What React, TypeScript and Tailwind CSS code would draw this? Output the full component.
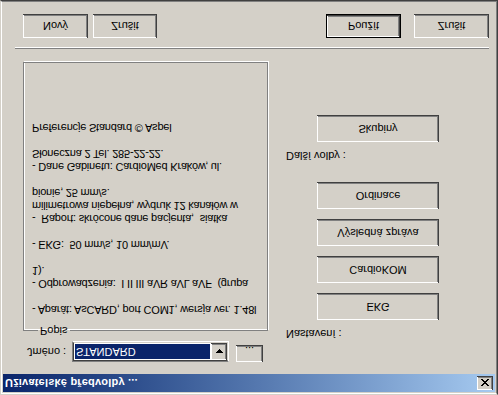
import React from "react";

const raised =
  "flex items-center justify-center bg-[#d4d0c8] text-black shadow-[inset_-1px_-1px_#404040,inset_1px_1px_#fff,inset_-2px_-2px_#808080,inset_2px_2px_#d4d0c8]";

const lines = [
  "- Aparát: AsCARD, port COM1, wersja ver. 1.48l",
  "",
  "- Odprowadzenia:  I II III aVR aVL aVF  (grupa",
  "1).",
  "",
  "- EKG:  50 mm/s, 10 mm/mV.",
  "",
  "-  Raport: skrócone dane pacjenta,  siatka",
  "milimetrowa niepełna, wydruk 12 kanałów w",
  "pionie, 25 mm/s.",
  "",
  "- Dane Gabinetu: CardioMed Kraków, ul.",
  "Słoneczna 2 Tel. 285-22-22.",
  "",
  "Preferencje Standard © Aspel",
];

const CloseGlyph = () => (
  <svg width="8" height="7" viewBox="0 0 8 7" shapeRendering="crispEdges">
    <path
      d="M0 0h2v1H0zM6 0h2v1H6zM1 1h2v1H1zM5 1h2v1H5zM2 2h4v1H2zM3 3h2v1H3zM2 4h4v1H2zM1 5h2v1H1zM5 5h2v1H5zM0 6h2v1H0zM6 6h2v1H6z"
      fill="#000"
    />
  </svg>
);

const SideButton = ({ label }: { label: string }) => (
  <div className={`${raised} w-[122px] h-[27px]`}>{label}</div>
);

const App = () => {
  return (
    <div className="w-[498px] h-[395px] -scale-y-100 bg-[#d4d0c8] font-['Liberation_Sans',Arial,sans-serif] text-[11px] leading-[13px] text-black">
      <div className="h-full border border-t-[#d4d0c8] border-l-[#d4d0c8] border-r-[#404040] border-b-[#404040]">
        <div className="h-full flex flex-col p-px border border-t-white border-l-white border-r-[#808080] border-b-[#808080]">
          {/* title bar */}
          <div className="h-[18px] flex items-center bg-gradient-to-r from-[#0a246a] to-[#a6caf0] pl-[2px] pr-[2px]">
            <span className="text-white font-bold flex-1 tracking-[0.2px]">Uživatelské předvolby ...</span>
            <div className={`${raised} w-[16px] h-[14px]`}>
              <CloseGlyph />
            </div>
          </div>

          <div className="flex">
            {/* left column */}
            <div className="pl-[20px] w-[265px]">
              <div className="mt-[12px] flex items-start h-[21px]">
                <span className="w-[49px] pl-[4px] self-center">Jméno :</span>
                <div className="w-[157px] h-[21px] flex border border-t-[#808080] border-l-[#808080] border-r-white border-b-white">
                  <div className="flex-1 flex border border-t-[#404040] border-l-[#404040] border-r-[#d4d0c8] border-b-[#d4d0c8] bg-white">
                    <div className="flex-1 p-px">
                      <div className="h-full bg-[#0a246a] text-white pl-[1px] flex items-center">STANDARD</div>
                    </div>
                    <div className={`${raised} w-[16px] h-[17px]`}>
                      <svg width="7" height="4" viewBox="0 0 7 4" shapeRendering="crispEdges">
                        <path d="M0 0h7v1H0zM1 1h5v1H1zM2 2h3v1H2zM3 3h1v1H3z" fill="#000" />
                      </svg>
                    </div>
                  </div>
                </div>
                <div className={`${raised} ml-[7px] w-[27px] h-[17px] items-end pb-[2px] leading-[8px]`}>...</div>
              </div>

              <fieldset className="mt-[4px] w-[245px] h-[275px] border border-[#808080] shadow-[1px_1px_0_#fff,inset_1px_1px_0_#fff] pl-[8px] pt-[8px]">
                <legend className="ml-[6px] px-[2px]">Popis</legend>
                {lines.map((l, i) => (
                  <div key={i} className="h-[13px] whitespace-pre tracking-[-0.2px]">
                    {l}
                  </div>
                ))}
              </fieldset>
            </div>

            {/* right column */}
            <div className="ml-[18px] pt-[34px]">
              <div>Nastavení :</div>
              <div className="mt-[7px] ml-[31px] flex flex-col gap-[10px]">
                <SideButton label="EKG" />
                <SideButton label="CardioKOM" />
                <SideButton label="Výsledná zpráva" />
                <SideButton label="Ordinace" />
              </div>
              <div className="mt-[20px]">Další volby :</div>
              <div className="mt-[7px] ml-[31px]">
                <SideButton label="Skupiny" />
              </div>
            </div>
          </div>

          <div className="mt-[13px] ml-[12px] mr-[6px] border-t border-t-[#808080] border-b border-b-white" />

          <div className="mt-[9px] flex items-center pl-[20px] pr-[6px]">
            <div className={`${raised} w-[65px] h-[24px]`}>Nový</div>
            <div className={`${raised} ml-[5px] w-[64px] h-[24px]`}>Zrušit</div>
            <div className="flex-1" />
            <div className="w-[75px] h-[24px] border border-black">
              <div className={`${raised} w-full h-full`}>Použít</div>
            </div>
            <div className={`${raised} ml-[13px] w-[75px] h-[24px]`}>Zrušit</div>
          </div>
        </div>
      </div>
    </div>
  );
};

export default App;
